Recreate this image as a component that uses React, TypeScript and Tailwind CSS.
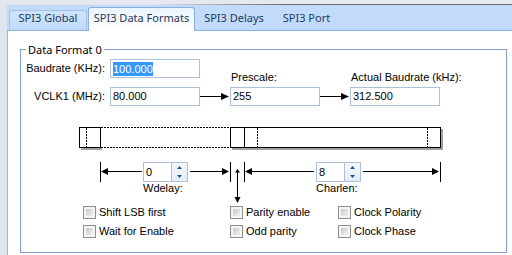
import React from "react";

const LBL = "font-['Liberation_Sans',Arial,sans-serif] text-[11px] leading-[13px] text-black whitespace-nowrap";
const UI = "font-['Noto_Sans',sans-serif] text-[11px] leading-[12px] text-[#1e395b] whitespace-nowrap";

function Input({ value, selected }: { value: string; selected?: boolean }) {
  return (
    <div className="w-[90px] h-[19px] border border-[#abc0da] bg-white flex items-center pl-[2px]">
      {selected ? (
        <span className={`${LBL} bg-[#3399ff] text-white leading-[14px] h-[14px]`}>{value}</span>
      ) : (
        <span className={LBL}>{value}</span>
      )}
    </div>
  );
}

function Spin({ value, label }: { value: string; label: string }) {
  return (
    <div className="flex flex-col w-[45px]">
      <div className="flex h-[20px] border border-[#abc0da] bg-white">
        <div className="w-[27px] pl-[2px] flex items-center">
          <span className={LBL}>{value}</span>
        </div>
        <div className="w-[16px] flex flex-col border-l border-[#abc0da] bg-[linear-gradient(#f4f8fd,#e3ecf7)]">
          <div className="flex-1 flex items-center justify-center">
            <svg width="5" height="3" viewBox="0 0 5 3">
              <polygon points="2.5,0 5,3 0,3" fill="#23508f" />
            </svg>
          </div>
          <div className="flex-1 flex items-center justify-center">
            <svg width="5" height="3" viewBox="0 0 5 3">
              <polygon points="0,0 5,0 2.5,3" fill="#23508f" />
            </svg>
          </div>
        </div>
      </div>
      <span className={LBL}>{label}</span>
    </div>
  );
}

function Check({ label }: { label: string }) {
  return (
    <div className="flex items-center gap-[3px] h-[13px]">
      <div className="w-[13px] h-[13px] border border-[#8e8f8f] bg-[#f4f4f4] p-[1px] shrink-0">
        <div className="w-full h-full border border-[#f6f6f6] bg-[linear-gradient(135deg,#c9c9c9,#f2f2f2)]" />
      </div>
      <span className={LBL}>{label}</span>
    </div>
  );
}

function Arrow() {
  return (
    <svg width="30" height="19" viewBox="0 0 30 19" shapeRendering="crispEdges">
      <line x1="0" y1="9.5" x2="22" y2="9.5" stroke="black" strokeWidth="1" />
      <polygon points="21,6 21,13 29,9.5" fill="black" shapeRendering="auto" />
    </svg>
  );
}

export default function App() {
  return (
    <div className="w-[512px] h-[255px] overflow-hidden bg-[#dfe5ee] flex flex-col">
      <div className="h-[4px] bg-[#e5e9ef] shrink-0" />
      <div className="h-[1px] shrink-0 bg-[linear-gradient(90deg,#dfe5ee_30%,#6d6d6d_55%)]" />
      <div className="flex-1 flex flex-col ml-[7px]">
        {/* tab strip */}
        <div className="h-[26px] shrink-0 bg-[#c2dbfb] border-b border-[#8bb0e0] flex items-end pl-[2px]">
          <div className="w-[78px] h-[20px] border border-b-0 border-[#a3c1e9] rounded-t-[3px] bg-[linear-gradient(#cfe3fc,#c2dbfb)] flex justify-center pt-[1px]">
            <span className={UI}>SPI3 Global</span>
          </div>
          <div className="relative z-10 ml-[1px] mb-[-1px] w-[107px] h-[24px] border border-b-0 border-[#8bb0e0] rounded-t-[3px] bg-[linear-gradient(#eaf3fd,#ffffff)] flex justify-center pt-[4px]">
            <span className={UI}>SPI3 Data Formats</span>
          </div>
          <div className="ml-[1px] w-[76px] h-[20px] border border-b-0 border-transparent flex justify-center pt-[1px]">
            <span className={UI}>SPI3 Delays</span>
          </div>
          <div className="w-[69px] h-[20px] border border-b-0 border-transparent flex justify-center pt-[1px]">
            <span className={UI}>SPI3 Port</span>
          </div>
        </div>
        {/* content */}
        <div className="flex-1 bg-white border-l border-[#9fb6d8] pt-[18px] pl-[12px]">
          <div className="relative w-[487px] h-[204px] border border-[#7f9fd5] flex flex-col">
            <span className={`${UI} absolute left-[5px] top-[-8px] bg-white px-[2px] leading-[16px] text-black`}>
              Data Format 0
            </span>

            {/* Block A */}
            <div className="flex items-end mt-[9px]">
              <div className="flex flex-col gap-[9px]">
                <div className="flex items-center">
                  <div className={`${LBL} w-[84px] text-right`}>Baudrate (KHz):</div>
                  <div className="ml-[5px]">
                    <Input value="100.000" selected />
                  </div>
                </div>
                <div className="flex items-center">
                  <div className={`${LBL} w-[84px] text-right`}>VCLK1 (MHz):</div>
                  <div className="ml-[5px]">
                    <Input value="80.000" />
                  </div>
                </div>
              </div>
              <Arrow />
              <div className="flex flex-col">
                <span className={`${LBL} pl-[1px] mb-[3px]`}>Prescale:</span>
                <Input value="255" />
              </div>
              <Arrow />
              <div className="flex flex-col">
                <span className={`${LBL} pl-[1px] mb-[3px]`}>Actual Baudrate (kHz):</span>
                <Input value="312.500" />
              </div>
            </div>

            {/* bar diagram */}
            <svg className="mt-[21px] ml-[58px] shrink-0" width="364" height="23" viewBox="0 0 364 23" shapeRendering="crispEdges">
              <rect x="2" y="21" width="21" height="2" fill="#a0a0a0" />
              <rect x="153" y="21" width="211" height="2" fill="#a0a0a0" />
              <rect x="362" y="2" width="2" height="21" fill="#a0a0a0" />
              <rect x="0.5" y="0.5" width="21" height="20" fill="white" stroke="black" />
              <line x1="7.5" y1="1" x2="7.5" y2="20" stroke="black" strokeDasharray="2 1" />
              <line x1="22" y1="0.5" x2="151" y2="0.5" stroke="black" strokeDasharray="2 1" />
              <line x1="22" y1="20.5" x2="151" y2="20.5" stroke="black" strokeDasharray="2 1" />
              <rect x="151.5" y="0.5" width="210" height="20" fill="white" stroke="black" />
              <line x1="165.5" y1="1" x2="165.5" y2="20" stroke="black" />
              <line x1="178.5" y1="1" x2="178.5" y2="20" stroke="black" strokeDasharray="2 1" />
              <line x1="348.5" y1="1" x2="348.5" y2="20" stroke="black" strokeDasharray="2 1" />
            </svg>

            {/* arrow row */}
            <div className="flex items-start mt-[12px] ml-[78px] h-[42px]">
              <svg width="44" height="20" viewBox="0 0 44 20" shapeRendering="crispEdges">
                <line x1="1.5" y1="0" x2="1.5" y2="20" stroke="black" />
                <line x1="9" y1="9.5" x2="43" y2="9.5" stroke="black" />
                <polygon points="2,9.5 9,6 9,13" fill="black" shapeRendering="auto" />
              </svg>
              <Spin value="0" label="Wdelay:" />
              <svg width="128" height="42" viewBox="0 0 128 42" shapeRendering="crispEdges">
                <line x1="2" y1="9.5" x2="34" y2="9.5" stroke="black" />
                <polygon points="34,6 34,13 41,9.5" fill="black" shapeRendering="auto" />
                <line x1="42.5" y1="0" x2="42.5" y2="20" stroke="black" />
                <polygon points="49.5,7 47,10.5 52,10.5" fill="black" shapeRendering="auto" />
                <line x1="49.5" y1="10" x2="49.5" y2="35" stroke="black" />
                <polygon points="46.5,35 52.5,35 49.5,41" fill="black" shapeRendering="auto" />
                <line x1="56.5" y1="0" x2="56.5" y2="20" stroke="black" />
                <polygon points="57,9.5 64,6 64,13" fill="black" shapeRendering="auto" />
                <line x1="64" y1="9.5" x2="126" y2="9.5" stroke="black" />
              </svg>
              <Spin value="8" label="Charlen:" />
              <svg width="81" height="20" viewBox="0 0 81 20" shapeRendering="crispEdges">
                <line x1="2" y1="9.5" x2="72" y2="9.5" stroke="black" />
                <polygon points="71,6 71,13 78,9.5" fill="black" shapeRendering="auto" />
                <line x1="79.5" y1="0" x2="79.5" y2="20" stroke="black" />
              </svg>
            </div>

            {/* checkboxes */}
            <div className="grid grid-cols-[147px_108px_auto] gap-y-[6px] mt-[2px] ml-[62px]">
              <Check label="Shift LSB first" />
              <Check label="Parity enable" />
              <Check label="Clock Polarity" />
              <Check label="Wait for Enable" />
              <Check label="Odd parity" />
              <Check label="Clock Phase" />
            </div>
          </div>
        </div>
      </div>
    </div>
  );
}
